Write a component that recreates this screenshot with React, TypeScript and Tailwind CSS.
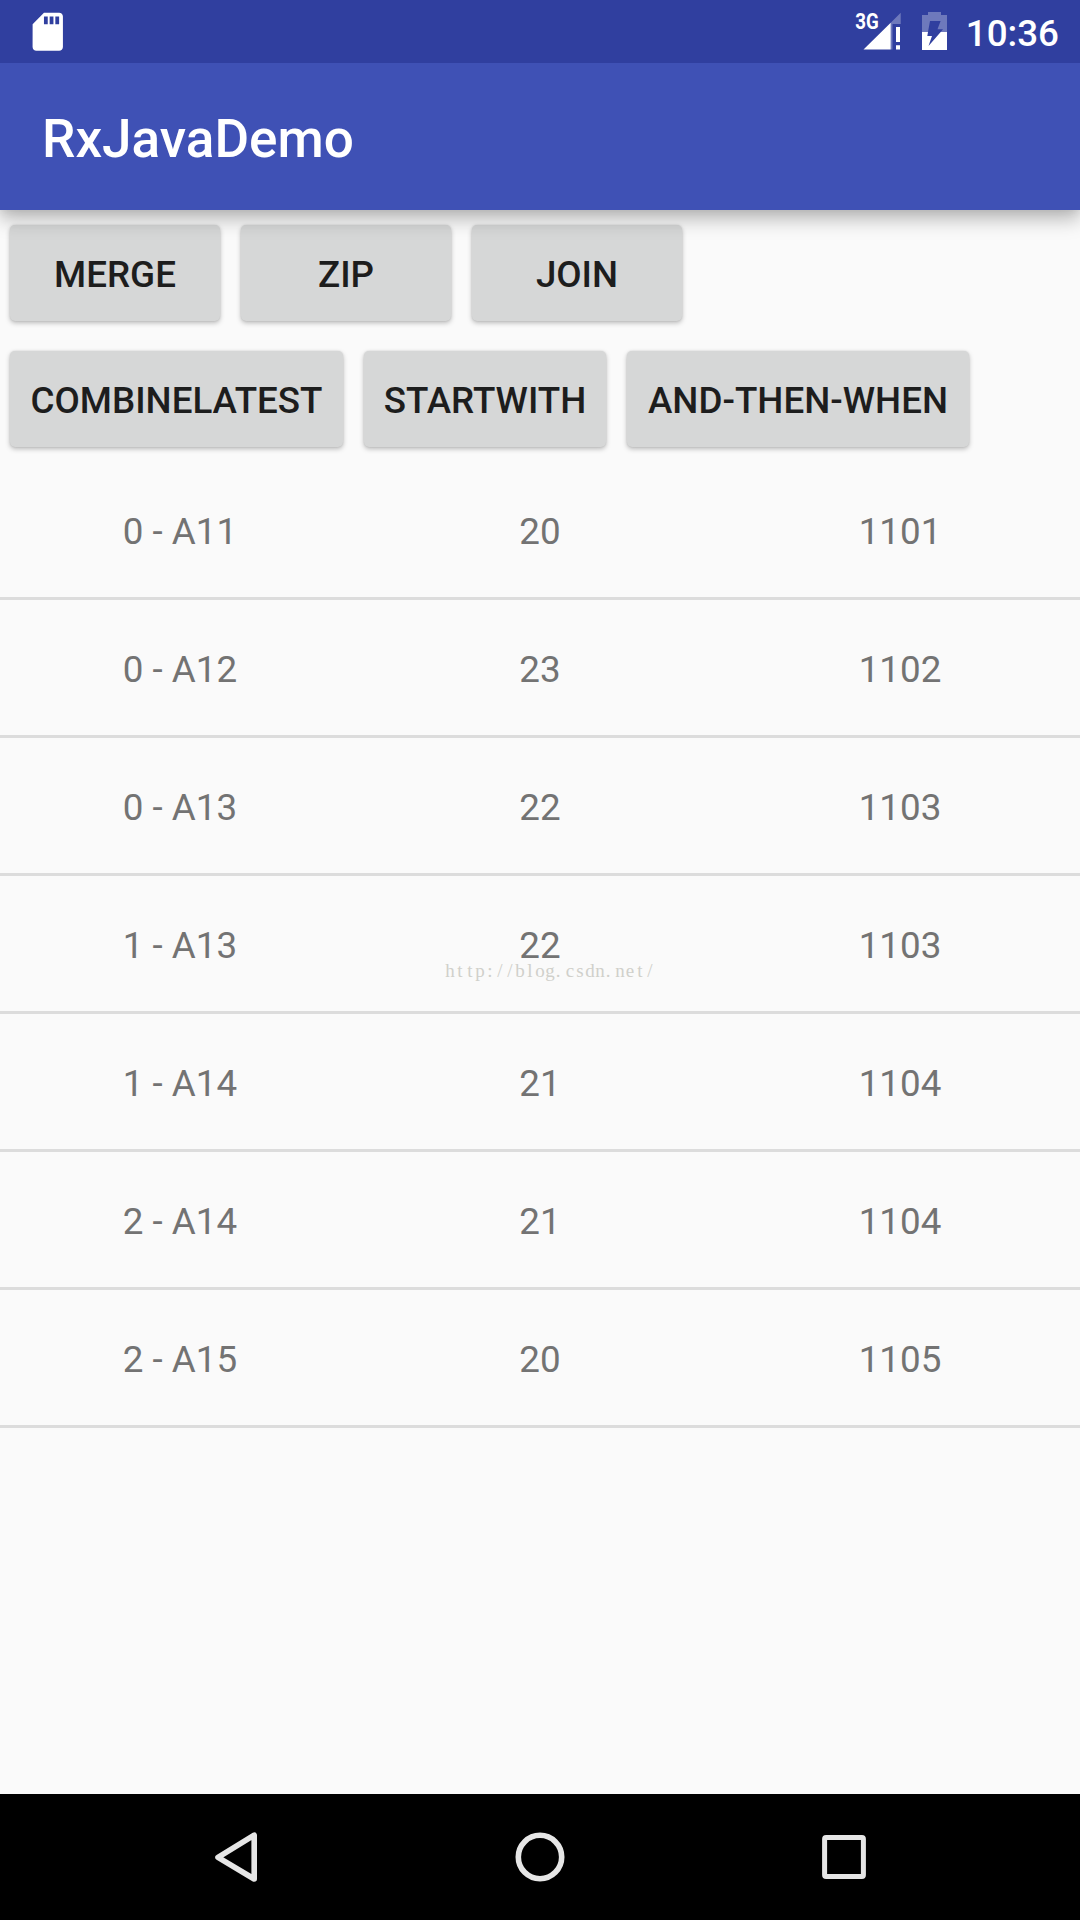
import React from "react";

const rows = [
  ["0 - A11", "20", "1101"],
  ["0 - A12", "23", "1102"],
  ["0 - A13", "22", "1103"],
  ["1 - A13", "22", "1103"],
  ["1 - A14", "21", "1104"],
  ["2 - A14", "21", "1104"],
  ["2 - A15", "20", "1105"],
];

function Button({ label, width }: { label: string; width: string }) {
  return (
    <button
      className={`${width} flex h-[96px] shrink-0 items-center justify-center rounded-[5px] bg-[#d6d7d7] pt-[5px] text-[36.75px] leading-none font-medium whitespace-nowrap text-[#1d1d1d] shadow-[0_2px_5px_rgba(0,0,0,0.26),0_0_2px_rgba(0,0,0,0.12)]`}
    >
      {label}
    </button>
  );
}

function StatusBar() {
  return (
    <div className="z-20 flex h-[63px] items-center justify-between bg-[#303f9f] pr-[21px] pl-[24.5px] text-white">
      <svg className="h-[45.5px] w-[45.5px]" viewBox="0 0 24 24" fill="currentColor">
        <path d="M18 2h-8L4.02 8 4 20c0 1.1.9 2 2 2h12c1.1 0 2-.9 2-2V4c0-1.1-.9-2-2-2zm-6 6h-2V4h2v4zm3 0h-2V4h2v4zm3 0h-2V4h2v4z" />
      </svg>
      <div className="flex items-center">
        <svg className="h-[63px] w-[110px]" viewBox="850 0 110 63" fill="currentColor">
          <text x="855.3" y="29" fontSize="21.5" fontWeight="700" textLength="23.5" lengthAdjust="spacingAndGlyphs">
            3G
          </text>
          <path opacity="0.3" d="M890.7 22.7L900.7 12.7V24H892.5V49.5H890.7Z" />
          <path d="M863.5 49.5L890.7 22.7V49.5ZM896 27H900V42H896ZM896 45.3H900V49.5H896Z" />
          <path opacity="0.3" d="M928 12H941V15H947V32H940.7L943 29.3H937.5L940.6 21H930L928 32H922V15H928Z" />
          <path d="M922 32H928L927.3 36H932L928.5 46L940.7 32H947V50H922Z" />
        </svg>
        <span className="ml-[6px] pt-[6px] text-[36.75px] leading-none font-medium">10:36</span>
      </div>
    </div>
  );
}

const siteUrl = "http://blog.csdn.net/";
const siteUrlColumns = siteUrl.split("").map((ch, i) => i * 10 + (ch === "." ? 3 : 5));

export default function App() {
  return (
    <div className="relative flex h-[1920px] w-[1080px] flex-col overflow-hidden bg-[#fafafa] font-['Roboto',sans-serif]">
      <StatusBar />
      <header className="z-10 flex h-[147px] items-center bg-[#3f51b5] pt-[6px] pl-[42px] shadow-[0_9px_18px_rgba(0,0,0,0.27),0_2px_8px_rgba(0,0,0,0.06)]">
        <h1 className="text-[53.1px] leading-none font-medium text-white">RxJavaDemo</h1>
      </header>
      <main className="flex flex-1 flex-col">
        <div className="flex gap-[21px] pt-[15px] pl-[10px]">
          <Button label="MERGE" width="w-[210px]" />
          <Button label="ZIP" width="w-[210px]" />
          <Button label="JOIN" width="w-[210px]" />
        </div>
        <div className="flex gap-[21px] pt-[30px] pb-[15px] pl-[10px]">
          <Button label="COMBINELATEST" width="w-[333px]" />
          <Button label="STARTWITH" width="w-[242px]" />
          <Button label="AND-THEN-WHEN" width="w-[342px]" />
        </div>
        {rows.map((row, i) => (
          <div
            key={i}
            className="grid h-[138px] grid-cols-3 items-center border-b-[3px] border-[#dcdcdc] pt-[5px] text-center text-[36.75px] leading-none text-[#737373]"
          >
            {row.map((cell, j) => (
              <span key={j}>{cell}</span>
            ))}
          </div>
        ))}
      </main>
      <nav className="flex h-[126px] bg-black text-[#e6e6e6]">
        <svg className="h-full w-full" viewBox="0 1794 1080 126" fill="none" stroke="currentColor">
          <path d="M218 1857.3L254.2 1835.2V1879Z" strokeWidth="5.6" strokeLinejoin="round" />
          <circle cx="540" cy="1857" r="21.7" strokeWidth="5.6" />
          <rect x="824.6" y="1837.6" width="38.8" height="38.8" rx="1.5" strokeWidth="5" />
        </svg>
      </nav>
      <svg
        className="absolute top-[960px] left-[445px] h-[22px] w-[212px] font-['Liberation_Serif',serif] text-[19px] text-[#d0d0cb]"
        viewBox="0 0 212 22"
        fill="currentColor"
      >
        <text x={siteUrlColumns.join(" ")} y="17" textAnchor="middle">
          {siteUrl}
        </text>
      </svg>
    </div>
  );
}
